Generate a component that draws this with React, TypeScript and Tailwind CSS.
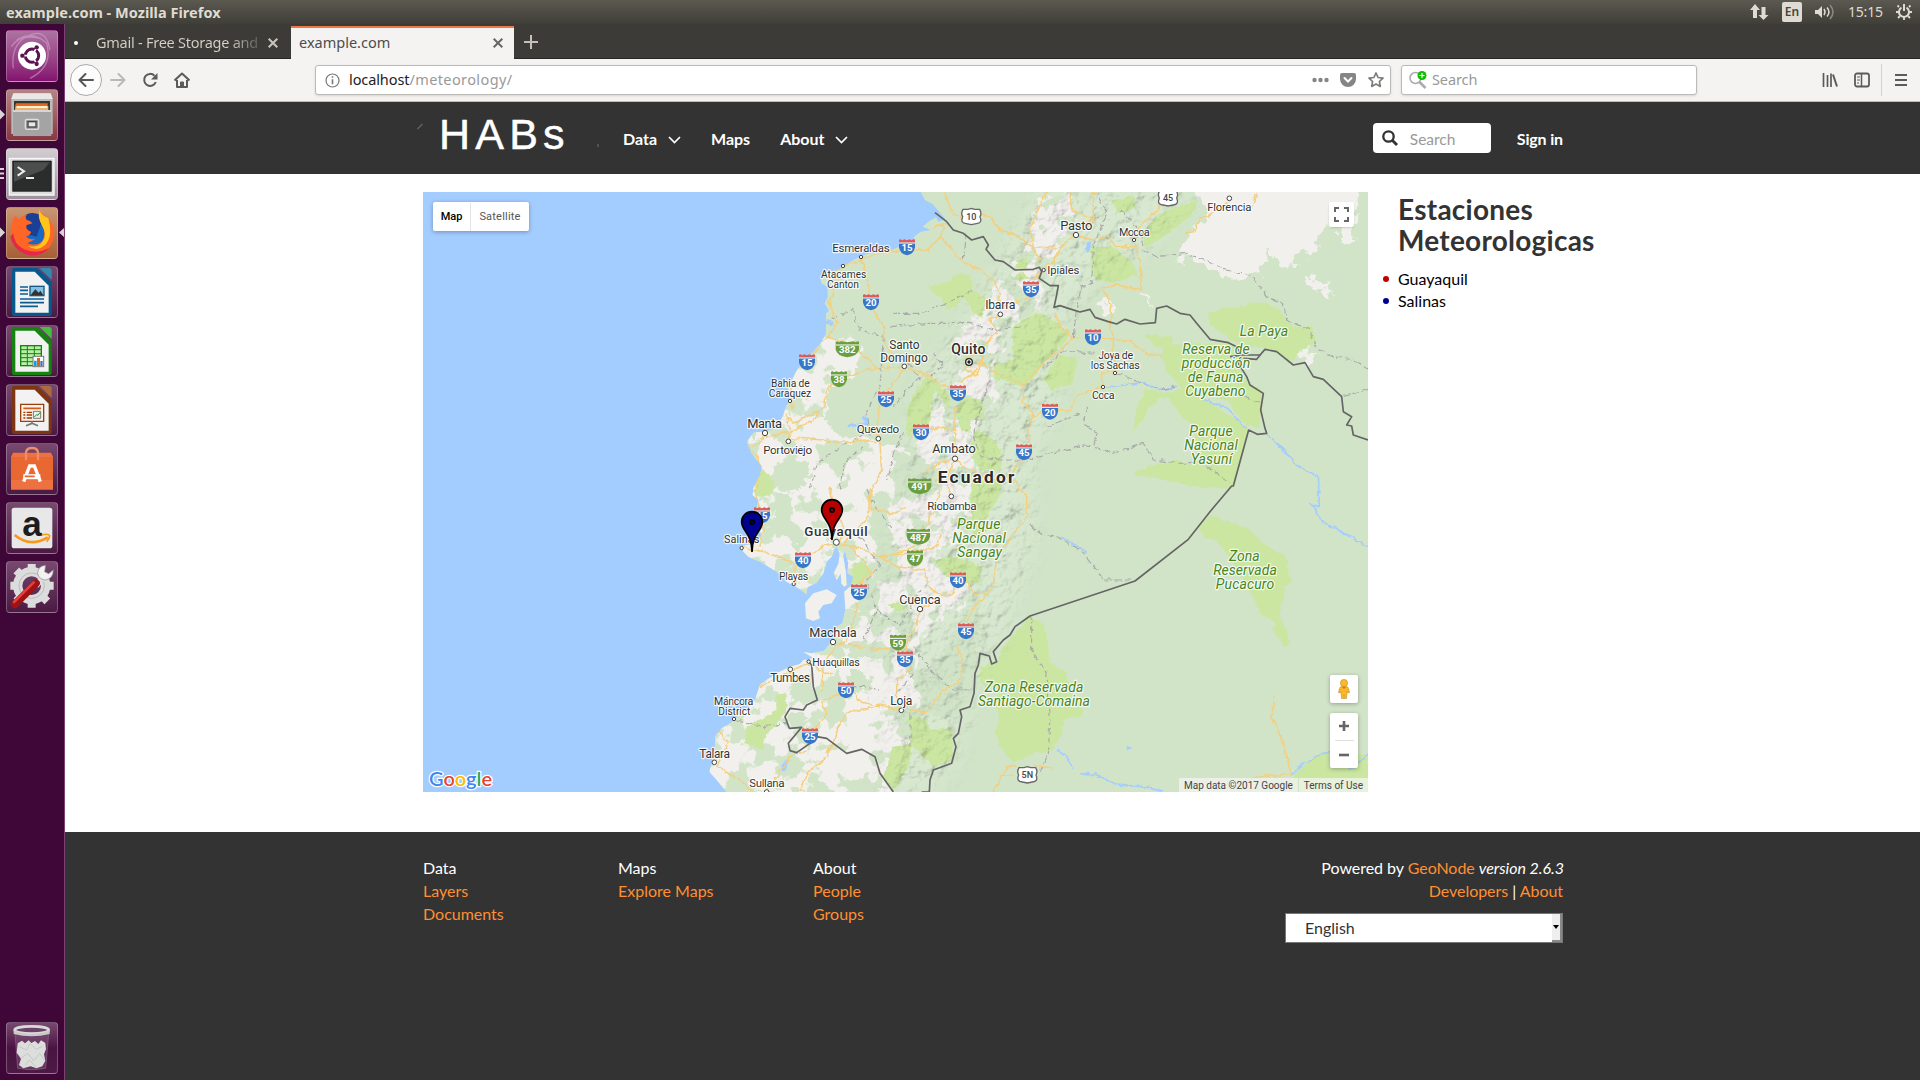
import type { ReactNode } from 'react';

/* ---------- Desktop panel ---------- */

function TopPanel() {
  return (
    <header className="flex h-6 shrink-0 items-center justify-between bg-gradient-to-b from-[#5b5950] to-[#3f3e38] pl-1.5 pr-2 font-['Noto_Sans','Open_Sans',sans-serif] text-[#dfdbd2]">
      <h1 className="-mt-px text-[14.5px] leading-6 font-bold tracking-[0.03px] whitespace-nowrap">example.com - Mozilla Firefox</h1>
      <div className="flex items-center">
        <svg className="mr-[13px] h-5 w-[19px]" viewBox="0 0 19 20" fill="#dfdbd2">
          <path d="M5 2 10 8H7v8H3V8H0zM13.500 18 8.500 13H11.500V5H15.500V13H18.500z" />
        </svg>
        <div className="flex h-5 w-5 items-center justify-center rounded-[2px] bg-[#dfdbd2] text-[12px] font-semibold text-[#45443e]">En</div>
        <svg className="ml-[13px] h-5 w-5" viewBox="0 0 20 20" fill="none" stroke="#dfdbd2" strokeWidth="1.500">
          <path d="M0 8h3l4-4v12l-4-4H0z" fill="#dfdbd2" stroke="none" />
          <path d="M9 7q2 3 0 6M12 5.500q4 4.500 0 9" />
          <path d="M15 3q6 7 0 14" stroke="#8c8a83" />
        </svg>
        <span className="-mt-px ml-[13px] w-[36px] text-[14px] tracking-[-0.2px] whitespace-nowrap">15:15</span>
        <svg className="ml-[12px] h-[18px] w-[16px]" viewBox="0 0 16 18" fill="none" stroke="#dfdbd2" strokeWidth="2">
          <path d="M5.500 4.600a5 5 0 1 0 5 0M8 1v7" />
          <path d="M3 4 1.500 2.500M13 4l1.500-1.500M3 9H0M16 9h-3M4 13l-2 2M12 13l2 2M8 14v3" strokeWidth="1.800" />
        </svg>
      </div>
    </header>
  );
}

/* ---------- Launcher ---------- */

function Tile({ index, tint, children }: { index: number; tint: string; children: ReactNode }) {
  return (
    <div className={`h-[52px] w-[52px] shrink-0 overflow-hidden rounded-[4px] border border-white/25 ${tint}`}>
      <svg className="h-full w-full" viewBox={`21 ${33 + 177 * index} 150 150`}>{children}</svg>
    </div>
  );
}

function Paper({ y, edge, corner }: { y: number; edge: string; corner: string }) {
  return (
    <g>
      <path d={`M44 ${y}H112L155 ${y + 43}V${y + 137}Q155 ${y + 144} 148 ${y + 144}H43Q36 ${y + 144} 36 ${y + 137}V${y + 7}Q36 ${y} 44 ${y}`} fill={edge} />
      <path d={`M119 ${y}H147Q155 ${y} 155 ${y + 8}V${y + 36}z`} fill={corner} />
      <path d={`M46 ${y + 11}H104L146 ${y + 53}V${y + 134}H46z`} fill="#f2f2f2" />
    </g>
  );
}

function Launcher() {
  const glass = 'bg-gradient-to-b from-[#77496f] to-[#4b1a43]';
  return (
    <aside className="relative flex w-[65px] shrink-0 flex-col gap-[7px] border-r border-[#7d4178] bg-[#3f0737] pt-[6px] pl-[6px]">
      <Tile index={0} tint="bg-gradient-to-b from-[#ad73a3] to-[#85106f]">
        <g fill="none" stroke="#d9a9d2" strokeOpacity=".55" strokeWidth="4">
          <path d="M40 145Q30 70 90 45Q140 25 150 90M50 60Q100 30 140 70Q160 140 90 175M34 80Q60 40 120 55" />
        </g>
        <circle cx="96" cy="107" r="42" fill="#fff" />
        <circle cx="96" cy="107" r="20" fill="none" stroke="#5c1350" strokeWidth="9" />
        <g stroke="#fff" strokeWidth="5"><path d="M96 107 68 107M96 107 110 83M96 107 110 131" /></g>
        <circle cx="96" cy="107" r="14" fill="#fff" />
        <g fill="#5c1350"><circle cx="67" cy="107" r="6.500" /><circle cx="110" cy="82" r="6.500" /><circle cx="110" cy="132" r="6.500" /></g>
      </Tile>
      <Tile index={1} tint="bg-gradient-to-b from-[#b58484] to-[#873743]">
        <path d="M40 220H152L158 235V342H34V235z" fill="#bcbcbc" /><path d="M40 220H152L158 237H34z" fill="#e8e8e8" />
        <path d="M42 243H150V275H42z" fill="#3a3430" /><path d="M48 250H143V275H46V256z" fill="#e06a20" /><path d="M47 259H145V275H44z" fill="#f0b070" /><path d="M50 258H142V264H50z" fill="#fff0d0" />
        <path d="M39 270H154V348H39z" fill="#a4a4a4" /><path d="M39 270H154V276H39z" fill="#d6d6d6" />
        <rect x="76" y="298" width="40" height="30" rx="5" fill="#999" stroke="#ddd" strokeWidth="4" /><rect x="84" y="305" width="24" height="16" fill="#e8e8e8" stroke="#444" strokeWidth="4" />
      </Tile>
      <Tile index={2} tint="bg-gradient-to-b from-[#d3cdd2] to-[#9d919c]">
        <path d="M28 415H162V525H28z" fill="#ddd" stroke="#f6f6f6" strokeWidth="4" /><path d="M38 423H154V514H38z" fill="#2b2d2d" stroke="#111" strokeWidth="2" />
        <path d="M42 427H150L130 450 42 485z" fill="#4b4e4d" />
        <path d="M53 441 72 454 53 467M78 474H102" fill="none" stroke="#eee" strokeWidth="6" />
      </Tile>
      <Tile index={3} tint="bg-gradient-to-b from-[#c99672] to-[#a75f35]">
        <circle cx="98" cy="640" r="57" fill="#1769c4" /><path d="M80 583Q105 573 130 590L110 650 70 640z" fill="#1a3f94" />
        <path d="M119 568Q111 590 125 614Q140 640 127 663Q110 680 82 670Q94 666 108 655Q94 662 78 650Q88 648 94 636Q74 628 80 615L98 610Q88 600 80 600Q74 592 78 582Q64 590 58 598L44 588Q30 618 32 648Q42 698 95 706Q150 704 162 650Q169 614 134 586Q120 580 119 568" fill="#ff6524" />
        <path d="M119 568Q112 590 125 614Q144 646 127 665Q112 686 84 677Q108 698 135 675Q160 651 145 595Q120 585 119 568" fill="#ffc51b" />
        <path d="M31 650Q42 698 95 707Q130 706 148 684Q110 704 72 688Q42 674 40 640z" fill="#e3294b" />
      </Tile>
      <Tile index={4} tint={glass}>
        <Paper y={744} edge="#07598d" corner="#3489b3" />
        <g stroke="#0c5c91" strokeWidth="5"><path d="M60 801H84M60 811H84M60 822H84M60 837H132M60 848H132M60 859H114" /></g>
        <rect x="90" y="799" width="42" height="28" fill="#83c1e5" stroke="#135887" strokeWidth="4" /><path d="M92 825 106 808 116 818 121 812 130 825" fill="#333" />
      </Tile>
      <Tile index={5} tint={glass}>
        <g transform="translate(0 885)">
          <Paper y={36} edge="#168311" corner="#49bd40" />
          <rect x="62" y="92" width="62" height="60" fill="#b6f0a6" stroke="#168311" strokeWidth="4" />
          <path d="M62 104H124M62 116H124M62 128H124M62 140H124M82 92V152M103 92V152" stroke="#168311" strokeWidth="3" />
          <rect x="99" y="124" width="32" height="31" fill="#fff" stroke="#777" strokeWidth="3" /><path d="M102 137h8v16h-8z" fill="#159ee0" /><path d="M111 129h9v24h-9z" fill="#d9661d" /><path d="M121 138h7v15h-7z" fill="#4770bd" />
        </g>
      </Tile>
      <Tile index={6} tint={glass}>
        <g transform="translate(0 885)">
          <Paper y={213} edge="#7d3512" corner="#af693e" />
          <path d="M62 268H131V319H62z" fill="#fff2e5" stroke="#994010" strokeWidth="4" /><path d="M70 280H123" stroke="#d05b24" strokeWidth="5" />
          <path d="M70 292H76M80 292H96M70 300H76M80 300H96M70 309H76M80 309H96" stroke="#9d380b" strokeWidth="4" /><path d="M100 289H122V310H100z" fill="#eee" stroke="#777" strokeWidth="3" /><path d="m103 306 7-7 4 2 6-9" stroke="#11943c" strokeWidth="3" fill="none" />
          <path d="M96 319V325L78 332M96 325 114 332" stroke="#777" strokeWidth="5" fill="none" />
        </g>
      </Tile>
      <Tile index={7} tint={glass}>
        <g transform="translate(0 885)">
          <path d="M39 413H153L159 426V524H33V426z" fill="#ee7141" /><path d="M33 426H159V495H33z" fill="#e96730" />
          <path d="M78 436V412Q80 399 96 399T114 412V436" stroke="#ee8d68" strokeWidth="7" fill="none" />
          <path d="M71 500 89 453H103L121 500M76 484H114" fill="none" stroke="#fff" strokeWidth="10" /><path d="M70 478H121V493H70z" fill="#fff" /><path d="M74 484H104" stroke="#e96730" strokeWidth="5" />
        </g>
      </Tile>
      <Tile index={8} tint={glass}>
        <g transform="translate(0 885)">
          <rect x="35" y="578" width="122" height="122" rx="8" fill="#e8e8e8" />
          <text x="96" y="663" textAnchor="middle" fontFamily="Liberation Sans" fontSize="105" fontWeight="700" fill="#1c1c1c">a</text>
          <path d="M44 660Q91 699 143 667" stroke="#f79a1b" strokeWidth="8" fill="none" /><path d="M126 660Q145 655 149 662 149 670 140 680" stroke="#f79a1b" strokeWidth="5" fill="none" />
        </g>
      </Tile>
      <Tile index={9} tint={glass}>
        <g transform="translate(0 885)">
          <circle cx="95" cy="812" r="42" fill="none" stroke="#dcdcdc" strokeWidth="28" />
          <g stroke="#dcdcdc" strokeWidth="24"><path d="M95 747V765M95 859V878M31 812H48M142 812H161M49 766 61 778M129 846 142 859M49 858 61 846" /></g>
          <circle cx="95" cy="812" r="38" fill="none" stroke="#bbb" strokeWidth="3" />
          <path d="M108 812 132 785" stroke="#ddd" strokeWidth="18" /><path d="M137 751Q113 752 113 777 120 795 137 795 160 790 160 764L146 776 134 770z" fill="#f2f2f2" stroke="#888" strokeWidth="2" />
          <path d="M45 868 108 805" stroke="#a11313" strokeWidth="23" strokeLinecap="round" /><path d="M42 861 101 802" stroke="#e43f3c" strokeWidth="8" strokeLinecap="round" />
        </g>
      </Tile>
      <div className="mt-auto mb-[6px] h-[52px] w-[52px] rounded-[4px] border border-white/25 bg-gradient-to-b from-[#77496f] via-[#4b1343] to-[#4b1a43]">
        <svg className="h-full w-full" viewBox="21 69 150 150">
          <path d="M45 100 53 205Q95 214 137 205L146 100z" fill="#8b6288" fillOpacity=".4" stroke="#8a6387" strokeWidth="2" />
          <path d="M53 130 66 122 75 130 86 121 94 129 105 123 115 132 123 121 136 129 138 147 132 163 136 182 127 199 109 205 92 199 70 205 57 195 63 176 50 158z" fill="#dcdedb" />
          <path d="M58 140 80 150 90 130 108 148 127 139M62 175 83 160 101 182 119 160 134 181M76 196 88 180 108 201" stroke="#c6c8c6" strokeWidth="3" fill="none" />
          <ellipse cx="95" cy="90" rx="51" ry="11" fill="#6b4268" stroke="#dadada" strokeWidth="8" /><path d="M41 92Q95 112 149 92V102Q95 116 41 102z" fill="#c9cbc8" />
        </svg>
      </div>
      <svg className="pointer-events-none absolute top-0 left-0 h-[260px] w-[65px]" viewBox="0 0 65 260" fill="#d9d3d8">
        <path d="M0 85.500 5 90.500 0 95.500zM0 203.500 5 208.500 0 213.500zM64 204 59 208.500 64 213zM0 144h4v2H0zM0 148.500h4v2H0zM0 153h4v2H0z" />
      </svg>
    </aside>
  );
}

/* ---------- Browser chrome ---------- */

function CloseIcon({ color }: { color: string }) {
  return <svg className="h-[10px] w-[10px] shrink-0" viewBox="0 0 10 10" stroke={color} strokeWidth="2"><path d="m.700.700 8.600 8.600M9.300.700.700 9.300" /></svg>;
}

function BrowserChrome() {
  return (
    <div className="font-['Noto_Sans','Open_Sans',sans-serif] text-[14.5px]">
      <div className="flex h-[35px] border-b border-[#252521] bg-[#3c3b37]">
        <div className="flex w-[226px] items-center pt-[3px] pl-[9px] text-[#c8c4bb]">
          <span className="h-1 w-1 shrink-0 rounded-full bg-white" />
          <span className="ml-[18px] w-[166px] overflow-hidden bg-gradient-to-r from-[#d5d1c8] from-80% to-[#55534e] bg-clip-text tracking-[-0.25px] whitespace-nowrap text-transparent">Gmail - Free Storage and</span>
          <span className="ml-[6px]"><CloseIcon color="#c9c5bc" /></span>
        </div>
        <div className="-mb-px mt-[2px] flex w-[223px] items-center justify-between border-t-2 border-[#f07746] bg-[#f4f3f1] pr-[11px] pb-px pl-2 text-[#4c4c4c]">
          <span>example.com</span><CloseIcon color="#666" />
        </div>
        <svg className="mt-[11px] ml-[10px] h-[14px] w-[14px]" viewBox="0 0 14 14" stroke="#c5c1b8" strokeWidth="2"><path d="M7 0v14M0 7h14" /></svg>
      </div>
      <div className="flex h-[43px] items-center border-b border-[#bfbdba] bg-[#f4f3f1] pl-[5px]">
        <div className="flex h-8 w-8 items-center justify-center rounded-full border border-[#aaa] bg-[#fcfcfc]">
          <svg className="h-4 w-4" viewBox="0 0 16 16" fill="none" stroke="#555" strokeWidth="2" strokeLinecap="round" strokeLinejoin="round"><path d="M15 8H1.500M7.500 2l-6 6 6 6" /></svg>
        </div>
        <svg className="ml-2 h-4 w-4" viewBox="0 0 16 16" fill="none" stroke="#b9b8b6" strokeWidth="2" strokeLinecap="round" strokeLinejoin="round"><path d="M1 8h13.500M8.500 2l6 6-6 6" /></svg>
        <svg className="ml-4 h-4 w-4" viewBox="0 0 16 16" fill="none" stroke="#5b5b5b" strokeWidth="2"><path d="M13.800 10a6 6 0 1 1-1.300-6.300" /><path d="M15.500 1v6.500H9z" fill="#5b5b5b" stroke="none" /></svg>
        <svg className="ml-4 h-4 w-4" viewBox="0 0 16 16" fill="none" stroke="#5b5b5b" strokeWidth="2" strokeLinejoin="round"><path d="m.500 8.500 7.500-7 7.500 7M3 8v7h10V8" /><path d="M6.500 15V10h3v5z" fill="#5b5b5b" strokeWidth="1" /></svg>
        <div className="ml-[125px] flex h-[30px] w-[1076px] items-center rounded-[3px] border border-[#bcbab7] bg-white pl-[9px] pr-[6px] shadow-sm">
          <svg className="h-[15px] w-[15px]" viewBox="0 0 15 15" fill="none" stroke="#777"><circle cx="7.500" cy="7.500" r="6.500" strokeWidth="1.200" /><path d="M7.500 6.300v5M7.500 3.200v1.600" strokeWidth="1.600" /></svg>
          <span className="ml-[9px] tracking-[0.4px] text-[#999]"><span className="tracking-[-0.1px] text-[#222]">localhost</span>/meteorology/</span>
          <svg className="ml-auto h-4 w-[17px]" viewBox="0 0 17 16" fill="#858585"><circle cx="2.500" cy="8" r="2.200" /><circle cx="8.500" cy="8" r="2.200" /><circle cx="14.500" cy="8" r="2.200" /></svg>
          <svg className="ml-[11px] h-4 w-4" viewBox="0 0 16 16"><path d="M2 1h12q2 0 2 2v4a8 8 0 0 1-16 0V3q0-2 2-2" fill="#858585" /><path d="m4.500 6 3.500 3.500L11.500 6" fill="none" stroke="#fff" strokeWidth="2" strokeLinecap="round" /></svg>
          <svg className="ml-[12px] h-4 w-4" viewBox="0 0 16 16" fill="none" stroke="#7b7b7b" strokeWidth="1.700" strokeLinejoin="round"><path d="m8 1 2.100 4.500 4.900.600-3.600 3.400.900 4.900L8 12l-4.300 2.400.900-4.900L1 6.100l4.900-.600z" /></svg>
        </div>
        <div className="ml-[10px] flex h-[30px] w-[296px] items-center rounded-[3px] border border-[#bcbab7] bg-white pl-[7px] text-[#999] shadow-sm">
          <svg className="h-[18px] w-[18px]" viewBox="0 0 18 18"><circle cx="6.500" cy="7" r="5.500" fill="none" stroke="#aaa" strokeWidth="1.500" /><path d="m10.500 11 6 6" stroke="#aaa" strokeWidth="2.500" /><circle cx="13" cy="4.500" r="4.500" fill="#12bc00" /><path d="M13 2v5M10.500 4.500h5" stroke="#fff" strokeWidth="1.200" /></svg>
          <span className="ml-[5px] tracking-[-0.1px]">Search</span>
        </div>
        <svg className="ml-[125px] h-4 w-4" viewBox="0 0 16 16" stroke="#5b5b5b" strokeWidth="2" fill="none"><path d="M1.500 1v14M5.500 3v12M9 1.500v13.500" strokeWidth="1.700" /><path d="m11 2.500 4 12" /></svg>
        <svg className="ml-4 h-4 w-4" viewBox="0 0 16 16" stroke="#5b5b5b" fill="none"><rect x="1" y="1.500" width="14" height="13" rx="2" strokeWidth="1.800" /><path d="M7.500 1.500v13" strokeWidth="1.500" /><path d="M3 5h3M3 8h3M3 11h2" /></svg>
        <span className="ml-[11px] h-8 w-px bg-[#d2d1cf]" />
        <svg className="ml-[13px] h-4 w-3" viewBox="0 0 12 16" stroke="#5b5b5b" strokeWidth="2"><path d="M0 3h12M0 8h12M0 13h12" /></svg>
      </div>
    </div>
  );
}

/* ---------- Site header ---------- */

function Chevron() {
  return <svg className="h-2 w-[13px]" viewBox="0 0 13 8" fill="none" stroke="#fff" strokeWidth="1.700"><path d="m1 1 5.500 5.500L12 1" /></svg>;
}

function SiteHeader() {
  return (
    <nav className="flex h-[72px] items-center bg-[#333] pl-[352px] text-[16px] font-bold text-white">
      <div className="relative flex h-full w-[206px] items-center pl-[22px]">
        <svg className="absolute top-0 left-0 h-[72px] w-[206px]" viewBox="0 0 206 72" fill="none" stroke="#666"><path d="m.500 27 5-5M181 42v3" strokeWidth="1.200" /></svg>
        <span className="pb-[7px] font-['Liberation_Sans',sans-serif] text-[43px] leading-none font-normal tracking-[5.2px] [-webkit-text-stroke:0.5px_white]">HABs</span>
      </div>
      <span className="w-[45px] pt-[2px]">Data</span><span className="pt-1"><Chevron /></span>
      <span className="ml-[30px] pt-[2px]">Maps</span>
      <span className="ml-[30px] pt-[2px]">About</span><span className="ml-[10px] pt-1"><Chevron /></span>
      <div className="ml-auto flex h-[30px] w-[118px] items-center rounded-[4px] bg-white pl-[9px] font-normal text-[#999]">
        <svg className="h-4 w-4" viewBox="0 0 16 16" stroke="#333" fill="none"><circle cx="6.500" cy="6.500" r="5.200" strokeWidth="2.300" /><path d="m10.500 10.500 4.500 4.500" strokeWidth="2.800" /></svg>
        <span className="ml-3 pt-[3px] text-[15.500px]">Search</span>
      </div>
      <span className="mr-[357px] ml-[26px] pt-[2px] tracking-[-0.15px]">Sign in</span>
    </nav>
  );
}

/* ---------- Map drawing ---------- */

type ShieldKind = 'blue' | 'green' | 'white';

function Shield({ x, y, n, kind = 'blue', w = 48 }: { x: number; y: number; n: string; kind?: ShieldKind; w?: number }) {
  const h = w / 2;
  if (kind === 'white') {
    return (
      <g transform={`translate(${x} ${y})`}>
        <path d="M-25-22-10-22 0-25 10-22 25-22Q32-10 26 0 34 20 15 21L0 24-15 21Q-34 20-26 0-32-10-25-22z" fill="#fff" stroke="#666" strokeWidth="4" />
        <text y="10" textAnchor="middle" fontSize="27" fontWeight="500" fill="#444">{n}</text>
      </g>
    );
  }
  const body = kind === 'blue' ? '#3876c8' : '#6a9f40';
  const top = kind === 'blue' ? '#dc5c58' : '#6a9f40';
  return (
    <g transform={`translate(${x} ${y})`}>
      <path d={`M${-h}-12V-23l5-1 5 3 6-3 ${h - 16} 3 ${h - 16}-3 6 3 5-3 5 1V-12z`} fill={top} />
      <path d={`M${-h}-14H${h}V0Q${h - 3} 20 0 24 ${3 - h} 20 ${-h} 0z`} fill={body} />
      <path d={`M${-h}-13H${h}`} stroke="#fff" strokeWidth="3" />
      <text y="12" textAnchor="middle" fontSize="29" fontWeight="700" fill="#fff">{n}</text>
    </g>
  );
}

const shields: { x: number; y: number; n: string; kind?: ShieldKind; w?: number }[] = [
  { x: 681, y: 202, n: '15' }, { x: 573, y: 367, n: '20' }, { x: 381, y: 547, n: '15' }, { x: 502, y: 508, n: '382', kind: 'green', w: 70 },
  { x: 477, y: 598, n: '38', kind: 'green' }, { x: 618, y: 658, n: '25' }, { x: 834, y: 640, n: '35' }, { x: 723, y: 757, n: '30' },
  { x: 1053, y: 328, n: '35' }, { x: 1032, y: 817, n: '45' }, { x: 874, y: 110, n: '10', kind: 'white' }, { x: 1464, y: 54, n: '45', kind: 'white' },
  { x: 1239, y: 472, n: '10' }, { x: 1110, y: 695, n: '20' }, { x: 719, y: 919, n: '491', kind: 'green', w: 70 }, { x: 246, y: 1006, n: '15' },
  { x: 369, y: 1141, n: '40' }, { x: 715, y: 1070, n: '487', kind: 'green', w: 70 }, { x: 705, y: 1135, n: '47', kind: 'green' }, { x: 834, y: 1201, n: '40' },
  { x: 537, y: 1237, n: '25' }, { x: 858, y: 1354, n: '45' }, { x: 654, y: 1388, n: '59', kind: 'green' }, { x: 675, y: 1438, n: '35' },
  { x: 498, y: 1531, n: '50' }, { x: 390, y: 1669, n: '25' }, { x: 1042, y: 1785, n: '5N', kind: 'white' },
];

/* text, centre x, baseline y, width, font size */
const places: [string, number, number, number, number][] = [
  ['Esmeraldas', 543, 216, 172, 35], ['Atacames', 491, 293, 136, 31], ['Canton', 489, 322, 96, 31],
  ['Santo', 673, 507, 91, 36], ['Domingo', 672, 544, 143, 36], ['Bahia de', 331, 619, 116, 31], ['Caraquez', 330, 649, 127, 31],
  ['Manta', 254, 742, 105, 39], ['Portoviejo', 323, 822, 147, 35], ['Quevedo', 594, 759, 127, 35], ['Ambato', 822, 819, 131, 38],
  ['Ibarra', 961, 387, 91, 37], ['Pasto', 1189, 148, 97, 39], ['Mocoa', 1363, 166, 92, 33], ['Ipiales', 1150, 281, 96, 34],
  ['Florencia', 1648, 92, 133, 34], ['Joya de', 1307, 535, 105, 32], ['los Sachas', 1306, 565, 147, 32], ['Coca', 1270, 656, 68, 32],
  ['Riobamba', 816, 989, 148, 35], ['Salinas', 185, 1087, 106, 33], ['Playas', 341, 1198, 88, 32],
  ['Cuenca', 720, 1270, 124, 38], ['Machala', 459, 1369, 142, 38], ['Huaquillas', 468, 1456, 142, 32], ['Tumbes', 330, 1506, 119, 36],
  ['Máncora', 161, 1573, 118, 32], ['District', 163, 1603, 96, 31], ['Loja', 664, 1575, 66, 36],
  ['Talara', 104, 1733, 92, 36], ['Sullana', 261, 1820, 106, 35],
];

const parks: [string, number, number, number][] = [
  ['La Paya', 1752, 468, 145], ['Reserva de', 1608, 522, 202], ['producción', 1608, 564, 205], ['de Fauna', 1607, 606, 167], ['Cuyabeno', 1606, 648, 181],
  ['Parque', 1593, 768, 130], ['Nacional', 1593, 810, 161], ['Yasuní', 1594, 852, 124],
  ['Parque', 896, 1047, 130], ['Nacional', 897, 1089, 161], ['Sangay', 899, 1131, 134],
  ['Zona', 1693, 1141, 92], ['Reservada', 1695, 1183, 191], ['Pucacuro', 1695, 1225, 175],
  ['Zona Reservada', 1062, 1534, 296], ['Santiago-Comaina', 1062, 1576, 336],
];

const dots: [number, number, number][] = [
  [543, 231, 5], [489, 258, 5], [330, 663, 5], [255, 759, 8], [325, 784, 7], [595, 776, 7], [673, 559, 7], [961, 403, 7], [825, 836, 8],
  [1188, 165, 8], [1362, 180, 5], [1091, 270, 5], [1648, 55, 7], [1305, 579, 5], [1269, 621, 5], [814, 949, 7], [469, 1087, 9], [185, 1104, 5],
  [341, 1212, 5], [720, 1287, 8], [459, 1386, 8], [386, 1445, 5], [331, 1468, 7], [162, 1617, 5], [664, 1591, 7], [103, 1747, 7], [260, 1836, 7],
];

const coast =
  'M722 36 735 60 758 73 778 95 796 118 775 125 768 112 745 125 728 140 752 150 722 155 700 172 706 180 690 188 640 208 608 215 560 222 530 235 500 252 478 268 440 280 422 295 424 310 442 320 443 350 434 370 447 393 438 400 438 460 425 485 400 515 368 550 352 568 340 592 325 625 330 660 318 680 308 710 290 745 255 755 222 757 200 785 215 820 246 860 240 885 220 925 218 945 235 960 226 1000 238 1030 243 1068 228 1090 185 1098 190 1115 205 1130 240 1145 290 1175 322 1207 355 1225 380 1243 382 1222 410 1208 430 1180 440 1145 455 1130 462 1110 470 1100 478 1120 476 1150 461 1180 470 1200 482 1180 484 1210 492 1220 500 1215 498 1180 490 1130 494 1110 505 1150 502 1180 520 1190 512 1218 493 1235 496 1290 487 1330 470 1340 465 1370 450 1390 432 1412 395 1420 370 1416 400 1434 370 1440 360 1452 330 1460 290 1480 240 1513 225 1560 200 1590 178 1600 165 1620 125 1645 105 1670 105 1710 95 1750 88 1775 110 1800 140 1836H2064V36z';

const limeAreas = [
  'M1585 400 1620 388 1690 378 1740 365 1790 385 1840 440 1900 440 1905 490 1860 510 1840 545 1770 510 1670 490 1610 450 1590 430z',
  'M1360 760 1368 690 1395 628 1450 640 1510 625 1570 655 1670 720 1706 745 1660 918 1640 925 1560 922 1360 882 1430 850 1490 843 1560 850 1540 740 1500 705 1470 655 1440 652 1405 690z',
  'M1445 535 1450 500 1520 490 1650 490 1690 530 1685 590 1750 640 1740 740 1700 738 1640 660 1520 640 1465 580z',
  'M1395 465 1480 470 1470 510 1425 500z',
  'M1590 1005 1655 1030 1710 1050 1750 1090 1820 1132 1825 1180 1835 1200 1815 1220 1798 1300 1835 1390 1815 1400 1780 1350 1785 1330 1740 1300 1710 1230 1650 1130 1605 1080 1570 1070 1558 1040z',
  'M990 1380 1050 1308 1090 1330 1100 1360 1110 1445 1160 1480 1165 1510 1210 1590 1200 1612 1155 1618 1150 1650 1115 1710 1050 1722 1000 1750 960 1700 945 1650 960 1620 945 1560 960 1530 900 1510 900 1460 950 1450 968 1400z',
  'M880 900 975 900 950 960 912 1030 900 1100 880 1080 868 950z',
  'M760 1140 830 1130 905 1160 900 1210 860 1210 800 1190z',
  'M750 315 800 310 830 280 870 285 880 330 915 355 910 410 880 400 850 350 830 375 800 390 785 355 755 335z',
  'M940 555 1000 540 998 440 1050 405 1080 400 1175 460 1130 510 1095 545 1055 600 1030 622 945 595z',
  'M1090 600 1130 530 1190 530 1180 610 1120 630z',
  'M740 585 765 605 808 640 808 685 765 630 745 740 705 740 680 775 680 690 705 640z',
  'M840 650 890 655 915 685 915 718 870 720 870 750 845 755 830 700z',
  'M880 750 935 770 960 810 965 870 900 870 875 830z',
  'M1235 200 1300 200 1350 240 1375 285 1300 310 1248 300 1230 260z',
  'M1395 150 1440 100 1490 80 1560 62 1530 110 1450 170 1390 205z',
  'M1295 60 1360 50 1370 80 1320 100z', 'M1010 245 1035 230 1048 250 1030 272 1012 265z', 'M995 290 1020 277 1048 290 1020 304z',
  'M285 1550 315 1538 322 1590 255 1670 250 1710 195 1690 200 1640 290 1590z',
  'M246 865 285 910 275 945 235 950 218 930z', 'M685 1600 735 1620 750 1650 815 1645 820 1740 760 1760 690 1690z',
  'M640 1700 700 1690 690 1750 640 1836 610 1790z', 'M520 1150 545 1150 570 1170 542 1210 515 1210z', 'M622 1272 660 1265 680 1280 650 1295z',
  'M1840 1785 1880 1750 1920 1722 2000 1715 2064 1725V1836H1830z',
];

const paleLand =
  'M430 480 500 478 560 540 500 590 450 620 440 690 500 770 640 790 700 800 730 780 700 720 820 640 850 560 830 480 900 390 950 330 1010 250 1050 190 1060 90 1100 60 1160 40 1190 110 1110 240 1060 400 990 440 930 560 950 640 920 700 870 740 890 850 880 1000 860 1080 760 1120 860 1210 850 1290 780 1300 710 1400 700 1500 720 1590 690 1700 640 1836 0 1836 0 900 180 780 290 730 300 600z';

const greenPatches = [
  'M450 640 500 615 590 640 590 740 560 780 470 760 430 720z', 'M290 860 340 838 390 850 380 920 300 935z', 'M280 935 330 960 345 1040 390 1080 360 1110 310 1075 245 1050 290 1010z',
  'M590 1020 640 1060 650 1130 610 1190 590 1270 550 1300 520 1340 540 1240 570 1180z', 'M640 820 720 830 790 880 770 930 690 960 640 900z',
  'M470 1392 560 1380 600 1400 590 1430 520 1435z', 'M335 1510 395 1470 400 1540 385 1570 330 1585z', 'M325 1600 380 1590 370 1640 330 1640z',
  'M500 1480 560 1470 570 1520 500 1550z', 'M700 1500 800 1400 900 1200 900 1450 860 1600 730 1610z', 'M560 1300 620 1290 610 1340 570 1350z', 'M450 290 520 270 560 460 450 455z', 'M330 660 310 710 340 690z',
];

const roads = [
  'M790 36 820 100 850 115M900 105 930 110 965 155 1000 160 1060 205 1080 240M490 258 543 240 600 218 665 212M700 210 740 208 785 170 795 130 760 145M785 170 850 248 900 270 940 300 960 345M545 240 565 310 570 350M580 390 610 440 615 490 645 530 675 560M490 262 460 280 460 350 445 365 460 400 475 430 440 470 400 520M445 470 500 492 545 520 590 565 560 570 500 590M590 565 675 562 745 585 780 615 812 620M675 562 640 610 600 675 590 745 600 790 605 870 575 930 572 1000M460 610 438 635 435 680 420 690 400 720 330 755 260 770 215 800M420 690 340 730 315 705M315 700 335 755 325 784M325 784 350 775 430 780 450 790 550 780 590 790M345 580 330 600 340 690M200 785 245 860 225 930 240 1000 250 1050 240 1100M180 1100 250 1115 345 1150 345 1210M395 1125 430 1095 469 1090 540 1105 600 1130 650 1160 730 1170 750 1220 790 1250M600 1130 680 1120 770 1100 780 1060M610 1135 700 1100 760 1000 780 930M490 1090 520 1060 565 1010 570 930M570 985 640 1000 680 985M469 1090 500 1060 460 980 450 920M510 1100 550 1140 570 1180 540 1210M530 1270 525 1310 500 1380 470 1400 430 1450 425 1540M480 1390 540 1400 630 1410M530 1210 590 1170M720 1290 710 1340 690 1370 670 1420M690 1470 650 1500 650 1560 665 1590M665 1590 600 1575 540 1590 500 1600 470 1650 460 1690 440 1720M430 1560 520 1535 545 1570 600 1580M665 1590 710 1590 735 1605 790 1530 830 1510 850 1470 835 1400M860 1330 870 1300 910 1250 940 1220 950 1130 1040 1010 1040 950 1000 900M790 1250 820 1240 825 1200M860 1200 880 1240 918 1245M750 1270 715 1300M815 960 800 900 825 836 825 680M825 836 780 850 730 880M825 836 860 870M740 750 770 740 820 750 830 680M840 610 880 580 905 540 910 500 955 450 930 420 960 403M905 545 890 585 860 570 860 535 905 500M900 545 930 570 1030 615 1045 600M960 380 1000 370 1050 350M950 380 965 340M1030 615 1030 670 1060 695 1045 760 1048 790M1020 840 1000 880 940 900 870 870',
  'M1170 36 1175 90 1240 120 1190 150 1188 165 1240 180 1280 165 1310 200 1362 200M1240 120 1240 36M1185 165 1140 205 1060 200 1050 140 1100 36M1140 205 1120 245 1085 270 1060 300M1362 190 1380 240 1385 330 1310 315 1270 325 1295 380 1290 440 1300 470M1360 180 1370 150 1430 90 1450 60M1515 160 1540 155 1560 120 1640 70M1730 40 1715 80M1125 400 1140 440 1180 472 1210 472M1265 472 1350 485 1400 520 1450 528M1300 472 1300 520 1305 575 1265 580 1265 620 1190 650 1170 690 1130 690M1180 475 1100 540 1050 590M1090 690 1050 720M1785 1545 1775 1610 1810 1690 1835 1785 1750 1785 1700 1800',
  'M240 1520 300 1490 370 1455 400 1450 430 1480 460 1480M160 1615 240 1515M115 1650 145 1690 110 1760 180 1800 220 1836M260 1836 330 1730 380 1710M360 1836 380 1780 440 1730 460 1690M425 1560 440 1600 400 1650 380 1660M940 1836 980 1760 1010 1755M960 1790 1000 1785M1060 1755 1120 1765',
];

const provinces =
  'M855 160 850 240M640 400 720 400 790 375 880 330M630 440 750 430 870 430 940 450 1030 440M455 415 520 390 540 450 610 470 600 620 560 690 570 760 500 790 410 850 390 930M720 590 680 630 640 680M670 760 640 820 620 900M750 590 790 560 760 520M480 930 490 850 550 800M600 530 680 540 720 600M930 600 900 690 880 770 900 830 960 840 1030 840M560 930 600 1000 640 1050M540 1070 600 1160 560 1200 590 1290 550 1380M590 1290 660 1340 720 1230M700 1400 760 1480 820 1530 870 1530M650 1540 700 1480M690 1600 690 1700M170 1620 250 1640 320 1630M1180 470 1190 380 1205 320 1235 310 1240 200 1280 100 1250 40M1320 90 1380 150 1390 210 1430 230 1520 220 1570 240 1640 270 1720 290 1760 350 1810 370 1820 420 1890 450 1905 500 1960 530 2020 540 2064 570M1100 560 1150 510 1240 520M1310 580 1390 610 1440 630 1500 615M1220 680 1210 730 1250 760 1240 800 1300 820 1390 790 1420 840 1500 850 1560 845 1650 910M1040 840 1150 810 1230 795M1100 740 1200 700M1990 650 2064 625M1050 1035 1080 1060 1130 1070 1200 1110 1250 1170 1270 1200 1360 1200M1055 1310 1055 1410 1100 1480 1110 1600 1105 1720 1080 1780M1640 630 1740 670M480 1520 550 1520 600 1530';

const borders =
  'M765 98 800 125 820 150 850 160 875 180 910 170 925 195 918 208 945 240 970 245 1005 270 1060 268 1078 262 1085 275 1078 295 1110 317 1135 317 1130 345 1122 382 1140 377 1165 385 1200 396 1230 388 1245 412 1285 425 1310 432 1335 418 1380 432 1426 428 1430 385 1460 378 1500 400 1530 405 1550 430 1590 478 1645 488 1670 500 1685 530 1675 550 1700 590 1710 615 1750 640 1742 690 1755 745 1760 760 1732 763 1706 750 1660 918 1655 918 1590 995 1525 1078 1365 1203 1050 1308 1005 1340 990 1365 970 1380 940 1415 950 1445 935 1452 928 1428 900 1420 895 1455 885 1480 882 1540 870 1580 840 1590 845 1610 835 1660 820 1675 828 1700 815 1750 760 1770 750 1800 748 1836H725M1650 530 1690 525 1740 525 1755 508 1790 515 1840 555 1875 548 1900 590 1930 598 1985 650 1990 695 2015 710 2000 735 2015 738 2020 765 2064 780M1690 535 1730 538 1745 520M385 1445 395 1455 400 1520 412 1560 380 1575 370 1590 330 1585 315 1610 328 1645 365 1642 325 1690 330 1712 350 1718 390 1690 410 1670 440 1675 460 1690 500 1720 545 1708 585 1730 600 1780 640 1836';

function MapDrawing() {
  return (
    <svg className="block h-[600px] w-[945px]" viewBox="-771 36 2835 1800" fontFamily="Roboto, sans-serif">
      <defs>
        <clipPath id="land"><path d={coast} /></clipPath>
        <filter id="ragged" x="-5%" y="-5%" width="110%" height="110%">
          <feTurbulence type="fractalNoise" baseFrequency=".03" numOctaves="4" seed="4" result="n" />
          <feDisplacementMap in="SourceGraphic" in2="n" scale="60" xChannelSelector="R" yChannelSelector="G" />
        </filter>
        <filter id="rough" x="-2%" y="-2%" width="104%" height="104%">
          <feTurbulence type="fractalNoise" baseFrequency=".05" numOctaves="3" seed="9" result="n" />
          <feDisplacementMap in="SourceGraphic" in2="n" scale="16" xChannelSelector="R" yChannelSelector="G" />
        </filter>
        <filter id="speckle" x="0" y="0" width="100%" height="100%" colorInterpolationFilters="sRGB">
          <feTurbulence type="fractalNoise" baseFrequency=".014" numOctaves="5" seed="12" />
          <feColorMatrix values="0 0 0 0 .82  0 0 0 0 .895  0 0 0 0 .785  22 0 0 0 -11.600" />
          <feComposite in2="SourceAlpha" operator="in" />
        </filter>
        <filter id="relief" x="0" y="0" width="100%" height="100%">
          <feTurbulence type="fractalNoise" baseFrequency=".022" numOctaves="4" seed="7" result="n" />
          <feColorMatrix in="n" values="0 0 0 0 0 0 0 0 0 0 0 0 0 0 0 1 0 0 0 0" />
          <feDiffuseLighting surfaceScale="26" diffuseConstant="1.300" lightingColor="#fff"><feDistantLight azimuth="225" elevation="50" /></feDiffuseLighting>
          <feComposite in2="SourceAlpha" operator="in" />
        </filter>
        <filter id="soften"><feGaussianBlur stdDeviation="30" /></filter>
        <mask id="andes">
          <path filter="url(#soften)" fill="#fff" d="M1080 20H1560L1400 200 1220 330 1140 450 1140 650 1050 850 1060 1100 980 1350 880 1500 830 1750 740 1850H600L640 1500 560 1400 610 1150 660 900 720 600 900 350z" />
        </mask>
      </defs>
      <rect x="-771" y="36" width="2835" height="1800" fill="#a3ccff" />
      <path d={coast} fill="#d1e4c8" />
      <path d="M375 1270 400 1240 440 1228 470 1245 455 1270 430 1275 415 1295 420 1315 400 1323 378 1315z" fill="#f2f0ed" />
      <g clipPath="url(#land)">
        <g filter="url(#ragged)" fill="#f2f0ed">
          <path d={paleLand} />
          <path d="M1550 20H2035L2025 180 1990 190 1960 140 1940 130 1900 220 1870 210 1840 260 1790 250 1770 200 1740 280 1670 300 1610 280 1540 230 1490 240 1510 200 1530 160 1580 110z" />
          <path d="M1860 505 1920 520 1870 555zM1260 360 1280 350 1310 400 1270 400zM1380 330 1410 350 1420 380zM1880 290 1930 310 1960 350 1890 320z" />
        </g>
        <path d={paleLand} filter="url(#speckle)" />
        <g filter="url(#ragged)" fill="#d1e4c8">{greenPatches.map((d) => <path key={d} d={d} />)}</g>
        <g filter="url(#rough)" fill="#cae6a1">{limeAreas.map((d) => <path key={d} d={d} />)}</g>
        <g mask="url(#andes)" className="mix-blend-multiply" opacity=".17"><rect x="500" y="36" width="1100" height="1800" filter="url(#relief)" /></g>
        <g fill="none" stroke="#a3ccff" strokeWidth="5" filter="url(#rough)">
          <path d="M1280 622 1350 612 1395 608 1440 632 1490 618M1570 658 1640 685 1700 745M1760 760 1810 810 1850 855 1915 890 1918 980 1895 975 1930 1025 2010 1070 2064 1100M1130 1710 1160 1730 1180 1770M1200 1778 1250 1785 1310 1815 1390 1820 1450 1836M1835 1785 1870 1750 1930 1720 1980 1715 2010 1770 2064 1722M1140 1070 1180 1090 1220 1120" />
          <path d="M505 738 560 728 555 710M440 425 460 432M1225 190 1222 212M310 1770 320 1740M385 1440 370 1420" strokeWidth="10" />
        </g>
        <path d="M1340 1697 1358 1705 1340 1710zM1222 186 1234 184 1228 215 1218 218zM305 1755 325 1735 318 1770 305 1775z" fill="#a3ccff" />
        <path d={provinces} fill="none" stroke="#aaa" strokeWidth="3.500" strokeDasharray="20 9" filter="url(#rough)" />
        <g fill="none" stroke="#f3cf80" strokeWidth="4.500" strokeLinejoin="round" filter="url(#rough)">{roads.map((d) => <path key={d} d={d} />)}</g>
      </g>
      <path d={borders} fill="none" stroke="#656565" strokeWidth="5" strokeLinejoin="round" />
      {dots.map(([x, y, r]) => <circle key={`${x}-${y}`} cx={x} cy={y} r={r} fill="#fff" stroke="#444" strokeWidth="3" />)}
      <circle cx="867" cy="546" r="10" fill="#fff" stroke="#222" strokeWidth="4" /><circle cx="867" cy="546" r="5" fill="#222" />
      {shields.map((s) => <Shield key={`${s.x}-${s.y}`} {...s} />)}
      <g textAnchor="middle" stroke="#fff" strokeOpacity=".8" strokeWidth="7" strokeLinejoin="round" paintOrder="stroke" fill="#333">
        {places.map(([t, x, y, w, s]) => <text key={t + y} x={x} y={y + 1} fontSize={s} textLength={w}>{t}</text>)}
        <text x="865" y="522" fontSize="42" fontWeight="500" textLength="102" fill="#2d2d2d">Quito</text>
        <text x="468" y="1068" fontSize="40" fontWeight="500" textLength="190">Guayaquil</text>
        <text x="888" y="909" fontSize="52" fontWeight="700" textLength="230" fill="#2b2b2b">Ecuador</text>
        <g fontStyle="italic" fontSize="42" fill="#48851b">{parks.map(([t, x, y, w]) => <text key={t + y} x={x} y={y + 1} textLength={w}>{t}</text>)}</g>
      </g>
      {[{ x: 216, y: 1026, c: '#000090' }, { x: 456, y: 990, c: '#b80000' }].map((m) => (
        <g key={m.x} transform={`translate(${m.x} ${m.y})`}>
          <path d="M0 90C-1 56-9 43-20 27-28 16-31 10-31 0A31 31 0 0 1 31 0C31 10 28 16 20 27 9 43 1 56 0 90z" fill={m.c} stroke="#000" strokeWidth="5" />
          <circle r="6" fill={m.c} stroke="#000" strokeWidth="6" />
        </g>
      ))}
    </svg>
  );
}

function MapPanel() {
  const google: [string, string][] = [['G', '#4285f4'], ['o', '#ea4335'], ['o', '#fbbc05'], ['g', '#4285f4'], ['l', '#34a853'], ['e', '#ea4335']];
  return (
    <section className="relative h-[600px] w-[945px] shrink-0 overflow-hidden font-['Roboto',sans-serif]">
      <MapDrawing />
      <div className="absolute top-[10px] left-[10px] flex h-[29px] w-[96px] items-center rounded-[2px] bg-white pt-px text-[11px] shadow-[0_1px_4px_rgba(0,0,0,.3)]">
        <span className="flex h-full w-[38px] items-center justify-center border-r border-[#e3e3e3] font-medium text-black">Map</span>
        <span className="flex-1 text-center tracking-[0.2px] text-[#565656]">Satellite</span>
      </div>
      <div className="absolute top-[10px] right-[14px] flex h-[25px] w-[25px] items-center justify-center rounded-[2px] bg-white shadow-[0_1px_2px_rgba(0,0,0,.15)]">
        <svg className="h-[15px] w-[15px]" viewBox="0 0 15 15" fill="none" stroke="#666" strokeWidth="2"><path d="M1 5V1h4M10 1h4v4M14 10v4h-4M5 14H1v-4" /></svg>
      </div>
      <div className="absolute right-[10px] bottom-[89px] flex h-7 w-7 items-center justify-center rounded-[2px] bg-white shadow-[0_1px_4px_rgba(0,0,0,.3)]">
        <svg className="h-5 w-3" viewBox="0 0 12 20" fill="#fbb829" stroke="#c98a14" strokeWidth=".600"><path d="M3.500 7.500h5q1.500 0 2 2l1 4-1.500.500-1-2-.500 7.500h-2V16h-1v3.500h-2L3 12l-1 2-1.500-.500 1-4q.500-2 2-2" /><circle cx="6" cy="4" r="3.600" /><path d="M4 8h4l-2 2z" fill="#e06a20" stroke="none" /></svg>
      </div>
      <div className="absolute right-[10px] bottom-[24px] flex h-[55px] w-7 flex-col items-center justify-center gap-[9px] rounded-[2px] bg-white shadow-[0_1px_4px_rgba(0,0,0,.3)]">
        <svg className="h-[10px] w-[10px]" viewBox="0 0 10 10" stroke="#666" strokeWidth="2.600"><path d="M5 0v10M0 5h10" /></svg>
        <span className="h-px w-[19px] bg-[#e1e1e1]" />
        <svg className="h-[10px] w-[10px]" viewBox="0 0 10 10" stroke="#666" strokeWidth="2.600"><path d="M0 5h10" /></svg>
      </div>
      <div className="absolute right-0 bottom-0 flex h-[14px] w-[189px] items-center justify-between bg-[#f5f5f5]/70 pr-[5px] pl-[5px] text-[10px] whitespace-nowrap text-[#444]">
        <span>Map data ©2017 Google</span><span className="h-full border-l border-[#d3dfcd] pl-[5px] leading-[15px]">Terms of Use</span>
      </div>
      <svg className="absolute bottom-0 left-[4px] h-[26px] w-[70px]" viewBox="0 0 70 26" fontFamily="Lato, sans-serif" fontSize="20" fontWeight="600" paintOrder="stroke" stroke="#fff" strokeWidth="2.500" strokeLinejoin="round">
        <text x="2" y="20" textLength="63">{google.map(([l, c], i) => <tspan key={i} fill={c}>{l}</tspan>)}</text>
      </svg>
    </section>
  );
}

/* ---------- Page ---------- */

function Stations() {
  return (
    <div className="pl-[30px]">
      <h2 className="w-[210px] pt-[2px] text-[28px] leading-[31px] font-bold tracking-[0.25px] text-[#333]">Estaciones Meteorologicas</h2>
      <ul className="mt-[12px] text-[16px] leading-[22px] text-black">
        <li className="-ml-[15px] flex items-center gap-[9px]"><span className="h-[6px] w-[6px] rounded-full bg-[#c00000]" />Guayaquil</li>
        <li className="-ml-[15px] flex items-center gap-[9px]"><span className="h-[6px] w-[6px] rounded-full bg-[#000090]" />Salinas</li>
      </ul>
    </div>
  );
}

function Footer() {
  const columns = [['Data', 'Layers', 'Documents'], ['Maps', 'Explore Maps'], ['About', 'People', 'Groups']];
  return (
    <footer className="flex flex-1 bg-[#333] pt-[24px] pl-[358px] text-[16px] leading-[23px] text-[#ff8f31]">
      {columns.map(([title, ...links]) => (
        <div key={title} className="flex w-[195px] flex-col"><span className="text-white">{title}</span>{links.map((l) => <a key={l}>{l}</a>)}</div>
      ))}
      <div className="ml-auto mr-[356px] text-right">
        <p className="tracking-[-0.04px] text-white">Powered by <a className="text-[#ff8f31]">GeoNode</a> <i>version 2.6.3</i></p>
        <p className="pr-px tracking-[-0.04px]"><a>Developers</a> <span className="text-white">|</span> <a>About</a></p>
        <div className="mt-[11px] mr-px flex h-[30px] w-[278px] items-center justify-between border border-[#777] bg-white pl-[19px] text-[#333]">
          <span className="-mt-[2px]">English</span>
          <span className="flex h-full w-[10px] items-center justify-center border-r-2 border-b-2 border-[#888] bg-[#eee]"><svg className="h-[4px] w-[6px]" viewBox="0 0 6 4"><path d="M0 0h6L3 4z" /></svg></span>
        </div>
      </div>
    </footer>
  );
}

export default function App() {
  return (
    <div className="flex h-[1080px] w-[1920px] flex-col overflow-hidden bg-white">
      <TopPanel />
      <div className="flex min-h-0 flex-1">
        <Launcher />
        <div className="flex min-w-0 flex-1 flex-col font-['Lato',sans-serif]">
          <BrowserChrome />
          <SiteHeader />
          <main className="flex h-[658px] shrink-0 bg-white pt-[18px] pl-[358px]">
            <MapPanel />
            <Stations />
          </main>
          <Footer />
        </div>
      </div>
    </div>
  );
}
